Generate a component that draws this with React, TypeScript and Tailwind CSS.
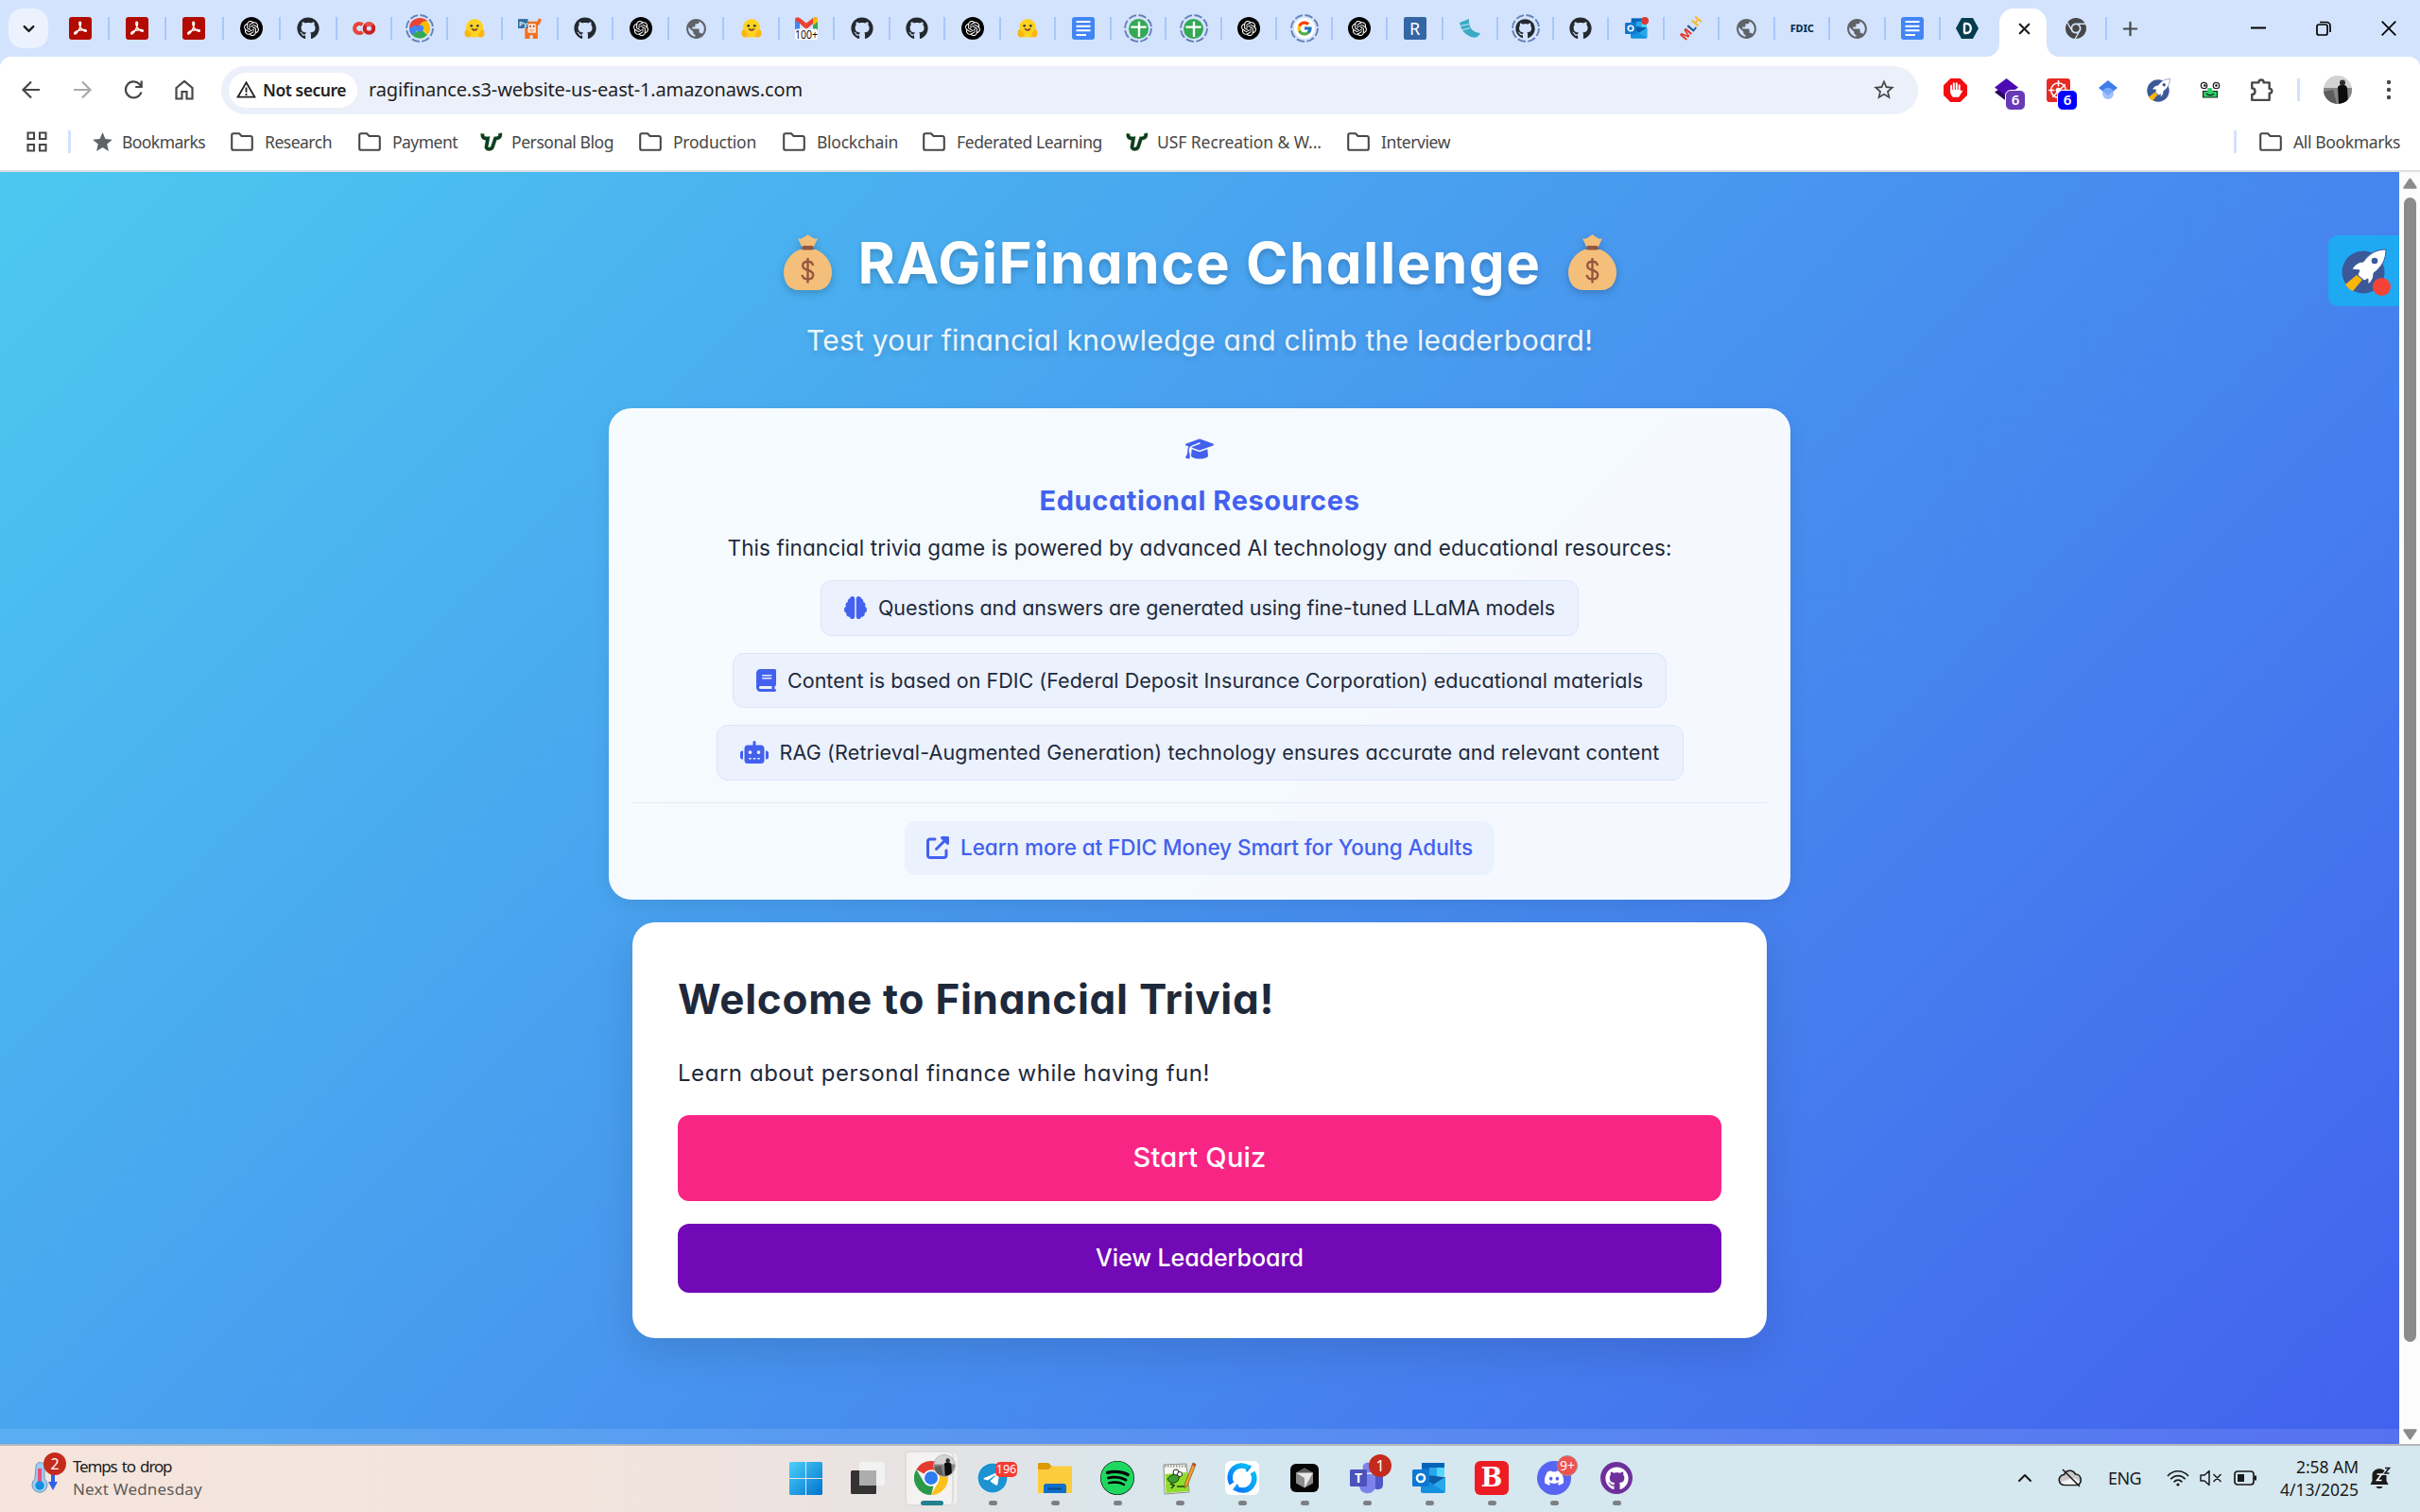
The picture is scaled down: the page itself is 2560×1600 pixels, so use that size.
import { useLayoutEffect, useRef, useState, type ReactNode } from 'react'
import {
  FaBook,
  FaBrain,
  FaChrome,
  FaDiscord,
  FaGithub,
  FaGraduationCap,
  FaRobot,
  FaSpotify,
  FaTelegram,
  FaUpRightFromSquare,
} from 'react-icons/fa6'
import { FcGoogle } from 'react-icons/fc'
import { SiOpenai } from 'react-icons/si'
import { MdPublic, MdStar, MdStarBorder } from 'react-icons/md'
import { ChevronDown, ChevronUp, Plus, X } from 'lucide-react'

interface FitTextProps {
  width: number
  className?: string
  children: string
}

// Spreads the letters so that a label takes the given width whatever font is installed
function FitText({ width, className = '', children }: FitTextProps) {
  const ref = useRef<HTMLSpanElement>(null)
  const [spacing, setSpacing] = useState(0)

  useLayoutEffect(() => {
    const el = ref.current
    if (!el) return
    el.style.letterSpacing = '0px'
    const natural = el.getBoundingClientRect().width
    const next = (width - natural) / children.length
    el.style.letterSpacing = `${next}px`
    setSpacing(next)
  }, [width, children])

  return (
    <span ref={ref} className={`inline-block whitespace-pre ${className}`} style={{ letterSpacing: `${spacing}px` }}>
      {children}
    </span>
  )
}

/* ---------- Favicons ---------- */

const AcrobatIcon = () => (
  <svg viewBox="0 0 24 24" className="h-6 w-6">
    <rect width="24" height="24" rx="3" fill="#b30b00" />
    <path
      d="M11.6 5.2c1.5 0 1 3.700-.6 7.100-1.500 3.300-3.800 6.300-5 5.600-1.300-1 1.600-3 5.300-3.900 3.600-.9 7.300-.8 7.100.7-.3 1.500-3.600-.1-5.600-2.700-1.900-2.400-2.700-6.800-1.200-6.800z"
      fill="none"
      stroke="#fff"
      strokeWidth="1.500"
    />
  </svg>
)

const OpenAiIcon = () => (
  <div className="flex h-6 w-6 items-center justify-center rounded-full bg-black">
    <SiOpenai className="h-4 w-4 text-white" />
  </div>
)

const GithubIcon = () => <FaGithub className="h-6 w-6 text-[#24292f]" />

const GlobeIcon = () => <MdPublic className="h-[25px] w-[25px] text-[#5f6368]" />

const ColabIcon = () => (
  <svg viewBox="0 0 24 24" className="h-6 w-6" fill="none" strokeWidth="4.200">
    <path d="M10.500 8.300a5 5 0 1 0 0 7.400" stroke="#e8463a" />
    <circle cx="17.400" cy="12" r="4.700" stroke="#c9211e" />
    <path d="M14 8.700a4.700 4.700 0 0 1 6.800 0" stroke="#ea4f43" />
  </svg>
)

const HuggingIcon = () => (
  <svg viewBox="0 0 24 24" className="h-6 w-6">
    <circle cx="12" cy="11" r="9" fill="#ffd21e" />
    <path d="M1.500 17c0-3 2-5 3.500-3l3 4.500c1 2-1 3.500-3.500 3S1.500 19 1.500 17zM22.500 17c0-3-2-5-3.500-3l-3 4.500c-1 2 1 3.500 3.500 3s3-2.500 3-4.500z" fill="#ffb50d" />
    <path d="M8 18l4 2.500 4-2.500v3.500H8z" fill="#ffd21e" />
    <circle cx="8.700" cy="9.300" r="1.400" fill="#3a3b45" />
    <circle cx="15.300" cy="9.300" r="1.400" fill="#3a3b45" />
    <path d="M8.500 12c1 3.500 6 3.500 7 0-2 1-5 1-7 0z" fill="#3a3b45" />
    <path d="M10.300 14c1-1 2.400-1 3.400 0-.9.900-2.500.9-3.400 0z" fill="#f44" />
  </svg>
)

const PyCowIcon = () => (
  <svg viewBox="0 0 24 24" className="h-[25px] w-[25px]">
    <path d="M7 4.500h12.500l1.500-3 3 1-2 5-2 1V22h-5v-3.500h-3V22H7z" fill="#f37021" />
    <path d="M10 7h8v9h-8z" fill="#fff3e8" />
    <circle cx="12.500" cy="9.500" r="1" fill="#c63d0c" />
    <circle cx="16" cy="9.500" r="1" fill="#c63d0c" />
    <rect x="11.500" y="12" width="5" height="3" rx="1" fill="#ffb98b" />
    <rect y="2" width="10" height="9.500" fill="#336d9d" />
    <text x="1" y="9.500" fontSize="7.500" fontWeight="700" fill="#cfe3f5" fontFamily="Noto Sans">Py</text>
  </svg>
)

const GmailIcon = () => (
  <svg viewBox="0 0 24 24" className="h-6 w-6">
    <path d="M0 3h5v11H0z" fill="#4285f4" />
    <path d="M19 3h5v11h-5z" fill="#34a853" />
    <path d="M0 3c0-3 3-3.500 5-2l7 5.500L19 1c2-1.500 5-1 5 2l-5 4-7 6-7-6z" fill="#ea4335" />
    <path d="M19 1c2-1.500 5-1 5 2v2l-5 4z" fill="#fbbc04" />
    <rect y="12.500" width="24" height="11.500" rx="2" fill="#fff" />
    <text x="0" y="22.800" fontSize="12.500" textLength="24" lengthAdjust="spacingAndGlyphs" fill="#000" fontFamily="Open Sans">100+</text>
  </svg>
)

const DocsIcon = () => (
  <svg viewBox="0 0 24 24" className="h-6 w-6">
    <rect width="24" height="24" rx="3" fill="#4285f4" />
    <path d="M4.500 5h15M4.500 9.700h15M4.500 14.300h15M4.500 19h10.500" stroke="#fff" strokeWidth="1.900" />
  </svg>
)

// Dashed ring marks a tab that was put to sleep
const SleepRing = ({ children }: { children: ReactNode }) => (
  <div className="relative flex h-[30px] w-[30px] items-center justify-center">
    <svg viewBox="0 0 30 30" className="absolute inset-0">
      <circle cx="15" cy="15" r="14" fill="none" stroke="#6580b5" strokeWidth="1.900" strokeDasharray="8.500 2.500" />
    </svg>
    {children}
  </div>
)

const SheetIcon = () => (
  <SleepRing>
    <svg viewBox="0 0 22 22" className="h-[21px] w-[21px]">
      <circle cx="11" cy="11" r="11" fill="#34a853" />
      <path d="M11.500 3v17M2.500 9h17" stroke="#fff" strokeWidth="2.500" />
    </svg>
  </SleepRing>
)

const GoogleSleepIcon = () => (
  <SleepRing>
    <div className="flex h-[22px] w-[22px] items-center justify-center rounded-full bg-white">
      <FcGoogle className="h-[18px] w-[18px]" />
    </div>
  </SleepRing>
)

const CloudSleepIcon = () => (
  <SleepRing>
    <svg viewBox="0 0 22 22" className="h-[22px] w-[22px]">
      <circle cx="11" cy="11" r="11" fill="#fff" />
      <path d="M11 0a11 11 0 0 1 11 11c0 3-1 5-3 7L9 5z" fill="#fbbc04" />
      <path d="M11 0C4 0 0 5 0 11c0 2 .5 4 2 6L14 4l5-1c-2-2-5-3-8-3z" fill="#ea4335" />
      <path d="M2 17c4 6 13 6 17 1l-6-6z" fill="#34a853" />
      <path d="M0 11c0 3 1 5 3 7l6-5-2-6z" fill="#4285f4" />
      <circle cx="11.500" cy="11" r="3.600" fill="#4285f4" />
    </svg>
  </SleepRing>
)

const GithubSleepIcon = () => (
  <SleepRing>
    <FaGithub className="h-[21px] w-[21px] text-[#24292f]" />
  </SleepRing>
)

const RIcon = () => (
  <div className="flex h-6 w-6 items-center justify-center rounded-[2px] bg-[#3465a4] text-lg leading-none text-white">R</div>
)

const HornIcon = () => (
  <svg viewBox="0 0 24 24" className="h-6 w-6">
    <path d="M1 6l10-4c-.5 9 3 14 12 15-2 5-7 6-12 3C5 17 2 12 1 6z" fill="#3babc3" />
    <path d="M1.500 9.500l9.500-2M3 14l9-2.500" stroke="#d3e3fd" strokeWidth="1" />
  </svg>
)

const OutlookIcon = ({ className }: { className: string }) => (
  <svg viewBox="0 0 36 36" className={className}>
    <path d="M10 2h24v14H10z" fill="#0364b8" />
    <path d="M10 7h8v9h-8z" fill="#0a6cc4" />
    <path d="M18 7h8v9h-8z" fill="#28a8ea" />
    <path d="M26 7h8v9h-8z" fill="#50d9ff" />
    <path d="M9 15l26 3v14a2 2 0 0 1-2 2H11a2 2 0 0 1-2-2z" fill="#1490df" />
    <path d="M35 17v16L16 22z" fill="#28a8ea" />
    <path d="M35 17L22 25l-6-4V15z" fill="#0a5ea8" />
    <rect y="9" width="18" height="18" rx="1.500" fill="#0f78d4" />
    <circle cx="9" cy="18" r="4.100" fill="none" stroke="#fff" strokeWidth="2.500" />
  </svg>
)

const OutlookTabIcon = () => (
  <div className="relative">
    <OutlookIcon className="h-6 w-6" />
    <span className="absolute -right-px top-0 h-2 w-2 rounded-full bg-[#d93a35]" />
  </div>
)

const MlhIcon = () => (
  <div className="-rotate-50 bg-[linear-gradient(90deg,#e73427_0_42%,#1d539f_42%_65%,#f8b92a_65%)] bg-clip-text text-[12.5px] font-extrabold leading-none text-transparent">
    MLH
  </div>
)

const FdicIcon = () => <FitText width={25} className="text-[11px] font-extrabold text-[#0a3255]">FDIC</FitText>

const DHexIcon = () => (
  <svg viewBox="0 0 24 24" className="h-6 w-6">
    <path d="M6 1h12l6 11-6 11H6L0 12z" fill="#053c4e" />
    <path d="M9 7v10M8.500 7h2.800c6 0 6 10 0 10H8.500" fill="none" stroke="#fff" strokeWidth="2.400" />
  </svg>
)

const FAVICONS = [
  AcrobatIcon, AcrobatIcon, AcrobatIcon, OpenAiIcon, GithubIcon, ColabIcon, CloudSleepIcon, HuggingIcon,
  PyCowIcon, GithubIcon, OpenAiIcon, GlobeIcon, HuggingIcon, GmailIcon, GithubIcon, GithubIcon, OpenAiIcon,
  HuggingIcon, DocsIcon, SheetIcon, SheetIcon, OpenAiIcon, GoogleSleepIcon, OpenAiIcon, RIcon, HornIcon,
  GithubSleepIcon, GithubIcon, OutlookTabIcon, MlhIcon, GlobeIcon, FdicIcon, GlobeIcon, DocsIcon,
]

/* ---------- Browser chrome ---------- */

const TabStrip = () => (
  <div className="flex h-[60px] items-center bg-[#d3e3fd]">
    <button className="ml-[9px] flex h-[42px] w-[42px] items-center justify-center rounded-[15px] bg-[#ebf2fe]">
      <ChevronDown className="h-[19px] w-[19px] text-[#1f1f1f]" strokeWidth={3} />
    </button>
    <div className="ml-[5px] flex h-full items-center">
      {FAVICONS.map((Icon, i) => (
        <div
          key={i}
          className={`flex h-6 items-center justify-center border-r-2 border-[#a8c7fa] ${i < 5 ? 'w-[60.2px]' : 'w-[58.5px]'}`}
        >
          <Icon />
        </div>
      ))}
      <div className="flex w-[56px] items-center justify-center">
        <DHexIcon />
      </div>
    </div>
    <div className="relative ml-[6px] flex h-[51px] w-[50px] items-center justify-center self-end rounded-t-[15px] bg-white pb-2">
      <svg viewBox="0 0 14 14" className="absolute -left-[14px] bottom-0 h-[14px] w-[14px]" fill="#fff">
        <path d="M14 0v14H0C8 14 14 8 14 0z" />
      </svg>
      <X className="ml-0.5 h-[19px] w-[19px] text-[#1f1f1f]" strokeWidth={2.8} />
      <svg viewBox="0 0 14 14" className="absolute -right-[14px] bottom-0 h-[14px] w-[14px]" fill="#fff">
        <path d="M0 0v14h14C6 14 0 8 0 0z" />
      </svg>
    </div>
    <div className="flex h-6 w-[64px] items-center justify-center border-r-2 border-[#a8c7fa]">
      <FaChrome className="h-[22px] w-[22px] text-[#474747]" />
    </div>
    <Plus className="ml-[13px] h-[23px] w-[23px] text-[#474747]" strokeWidth={2.3} />
    <div className="ml-auto flex items-center gap-[53px] pr-[25px]">
      <svg viewBox="0 0 16 16" className="h-4 w-4"><path d="M0 7.500h16" stroke="#000" strokeWidth="2" /></svg>
      <svg viewBox="0 0 16 16" className="h-4 w-4" fill="none" stroke="#000" strokeWidth="1.700">
        <rect x="1" y="4" width="11" height="11" rx="2" />
        <path d="M4 1.500h7a4 4 0 0 1 4 4V12" />
      </svg>
      <svg viewBox="0 0 16 16" className="h-4 w-4"><path d="M.7.7l14.600 14.600M15.300.7L.7 15.300" stroke="#000" strokeWidth="1.700" /></svg>
    </div>
  </div>
)

const RocketLogo = ({ className }: { className: string }) => (
  <svg viewBox="0 0 48 48" className={className}>
    <circle cx="23" cy="25" r="22.500" fill="#3b5998" />
    <path d="M4 38l12-10 6 5-10 12c-3-1-6-4-8-7z" fill="#fbb60b" />
    <path d="M47 1C36 1 29 6 23 14c-5 0-9 3-12 8l8 1-2 5 7 6 4-2 0 6c4-3 6-7 6-12 8-6 13-14 13-25z" fill="#fff" stroke="#3b5998" strokeWidth="1" />
    <circle cx="35" cy="13" r="3.300" fill="#3b5998" />
  </svg>
)

const CountBadge = ({ className }: { className: string }) => (
  <span className={`absolute left-[11px] top-[12px] flex h-[22px] w-[22px] items-center justify-center rounded-[6px] border border-white text-[15px] font-semibold text-white ${className}`}>
    6
  </span>
)

const Avatar = ({ className }: { className: string }) => (
  <svg viewBox="0 0 30 30" className={className}>
    <defs>
      <clipPath id="avatar">
        <circle cx="15" cy="15" r="15" />
      </clipPath>
    </defs>
    <g clipPath="url(#avatar)">
      <rect width="30" height="30" fill="#d2d2d2" />
      <path d="M0 13h30v17H0z" fill="#858585" />
      <path d="M0 17l10-2 4 15H0z" fill="#5c5c5c" />
      <path d="M15 12c2-3 9-3 10 1l1 17H16z" fill="#0c0c0c" />
      <circle cx="20" cy="7.500" r="3" fill="#2c2c2c" />
    </g>
  </svg>
)

const Toolbar = () => (
  <div className="flex h-[70px] items-center bg-white">
    <div className="flex w-[234px] items-center gap-[30px] pl-[21px] text-[#474747]">
      <svg viewBox="0 0 24 24" className="h-6 w-6" fill="none" stroke="currentColor" strokeWidth="2.200">
        <path d="M21 12H4M12 3.500L3.500 12l8.500 8.500" />
      </svg>
      <svg viewBox="0 0 24 24" className="h-6 w-6" fill="none" stroke="#a9a9a9" strokeWidth="2.200">
        <path d="M3 12h17M12 3.500l8.500 8.500-8.500 8.500" />
      </svg>
      <svg viewBox="0 0 24 24" className="h-6 w-6" fill="none" stroke="currentColor" strokeWidth="2.200">
        <path d="M20.500 14.500A8.500 8.500 0 1 1 18.500 6l2 2.500M20.700 2.500v6.500h-6.500" />
      </svg>
      <svg viewBox="0 0 24 24" className="h-6 w-6" fill="none" stroke="currentColor" strokeWidth="2.200">
        <path d="M3.500 10L12 3l8.500 7v11.500h-6V14h-5v7.500h-6z" />
      </svg>
    </div>
    <div className="flex h-[51px] w-[1795px] items-center rounded-full bg-[#ecf0fa] pl-2 pr-[23px]">
      <div className="flex h-[37px] w-[136px] items-center rounded-full bg-white pl-2">
        <svg viewBox="0 0 22 20" className="h-5 w-[21px]" fill="none" stroke="#1f1f1f" strokeWidth="1.900">
          <path d="M11 2L1.700 18h18.600zM11 7.500v5.500M11 14.300v2" />
        </svg>
        <FitText width={88} className="ml-[7px] text-[17.5px] font-semibold text-[#1f1f1f]">Not secure</FitText>
      </div>
      <FitText width={459} className="ml-3 text-[20px] text-[#1f1f1f]">ragifinance.s3-website-us-east-1.amazonaws.com</FitText>
      <MdStarBorder className="ml-auto h-[26px] w-[26px] text-[#474747]" />
    </div>
    <div className="ml-[27px] flex items-center">
      <svg viewBox="0 0 24 24" className="mr-[29px] h-[25px] w-[25px]">
        <path d="M7 0h10l7 7v10l-7 7H7l-7-7V7z" fill="#f40d12" />
        <path d="M7.800 13V7.500M10.400 11V5M13.200 11V5M16 13V7" stroke="#fff" strokeWidth="1.900" strokeLinecap="round" />
        <path d="M6.900 11.500h10v1.500l1.300-1c.8-.3 1.300.6.8 1.400L15.500 19H9.500c-1.500-1.500-2.600-3-2.600-5z" fill="#fff" />
      </svg>
      <div className="relative mr-[30px]">
        <svg viewBox="0 0 24 24" className="h-[25px] w-[25px]">
          <path d="M12 6l12 8-12 9L0 14z" fill="#270656" />
          <path d="M12 0l12 9-12 9L0 9z" fill="#4c0bb0" />
        </svg>
        <CountBadge className="bg-[#673ab7]" />
      </div>
      <div className="relative mr-[28px]">
        <svg viewBox="0 0 24 24" className="h-[25px] w-[25px]">
          <rect width="24" height="24" rx="3" fill="#e62b25" />
          <g fill="none" stroke="#fff" strokeWidth="1.500">
            <circle cx="12" cy="12" r="7.500" />
            <path d="M12 2v6M12 16v6M2 12h6M16 12h6M6 19L19 6" />
            <circle cx="12" cy="12" r="2" fill="#fff" />
          </g>
        </svg>
        <CountBadge className="bg-[#0000ff]" />
      </div>
      <svg viewBox="0 0 24 24" className="mr-[29px] h-[24px] w-[24px]">
        <path d="M12 2l10 8-10 8-10-8z" fill="#3f7de8" />
        <circle cx="12" cy="16" r="6" fill="#a0c3ff" />
        <path d="M6.500 13.500C9 9.500 15 9.500 17.500 13.500L12 18z" fill="#76a7fa" />
      </svg>
      <RocketLogo className="mr-[30px] h-[25px] w-[25px]" />
      <svg viewBox="0 0 24 24" className="mr-[29px] h-[24px] w-[24px]">
        <path d="M4.500 13.500h15V20h-15z" fill="#27d366" stroke="#222" strokeWidth="1.200" />
        <path d="M9.500 10h4l1.500 4H9z" fill="#27d366" />
        <path d="M8 16c2 2.300 6 2.300 8 0" fill="none" stroke="#222" strokeWidth="1.300" />
        <g fill="#fff" stroke="#222" strokeWidth="1.300">
          <circle cx="5.500" cy="7.500" r="3.200" />
          <circle cx="18.500" cy="7.500" r="3.200" />
        </g>
        <circle cx="6.300" cy="7.500" r="1.200" />
        <circle cx="18.500" cy="7.500" r="1.200" />
      </svg>
      <svg viewBox="0 0 24 24" className="h-[26px] w-[26px]" fill="none" stroke="#474747" strokeWidth="2.200">
        <path d="M3 5h6.500c0-3.600 5-3.600 5 0H20v6c3.300 0 3.300 4.500 0 4.500V22H3v-5.500c4 0 4-6 0-6z" strokeLinejoin="round" />
      </svg>
      <div className="ml-[25px] h-6 w-[3px] bg-[#d3e3fd]" />
      <Avatar className="ml-[25px] h-[30px] w-[30px]" />
      <svg viewBox="0 0 6 22" className="ml-[36px] h-[22px] w-[6px]" fill="#474747">
        <circle cx="3" cy="3" r="2.200" />
        <circle cx="3" cy="11" r="2.200" />
        <circle cx="3" cy="19" r="2.200" />
      </svg>
    </div>
  </div>
)

const FolderIcon = () => (
  <svg viewBox="0 0 24 20" className="h-5 w-6" fill="none" stroke="#474747" strokeWidth="2.100">
    <path d="M1.200 3a1.800 1.800 0 0 1 1.800-1.800h6L11.500 4H21a1.800 1.800 0 0 1 1.800 1.800V17a1.800 1.800 0 0 1-1.800 1.800H3A1.800 1.800 0 0 1 1.200 17z" />
  </svg>
)

const BullIcon = () => (
  <svg viewBox="0 0 24 22" className="h-[22px] w-6" fill="none">
    <path d="M2.500 2.500c-.6 4 1.500 5.500 5.500 5l-1.500 9c-.3 3 5.500 3 6.500 0l3-9c3.500 0 6-1.500 5-5.500" stroke="#cfc493" strokeWidth="4.600" />
    <path d="M2.500 2.500c-.6 4 1.500 5.500 5.500 5l-1.500 9c-.3 3 5.500 3 6.500 0l3-9c3.500 0 6-1.500 5-5.500" stroke="#053f28" strokeWidth="3.500" />
  </svg>
)

const BOOKMARKS = [
  { label: 'Bookmarks', icon: 'star', textWidth: 88, cell: 'w-[146px]' },
  { label: 'Research', icon: 'folder', textWidth: 71, cell: 'w-[135px]' },
  { label: 'Payment', icon: 'folder', textWidth: 69, cell: 'w-[129px]' },
  { label: 'Personal Blog', icon: 'bull', textWidth: 108, cell: 'w-[168px]' },
  { label: 'Production', icon: 'folder', textWidth: 88, cell: 'w-[152px]' },
  { label: 'Blockchain', icon: 'folder', textWidth: 86, cell: 'w-[148px]' },
  { label: 'Federated Learning', icon: 'folder', textWidth: 154, cell: 'w-[215px]' },
  { label: 'USF Recreation & W...', icon: 'bull', textWidth: 174, cell: 'w-[234px]' },
  { label: 'Interview', icon: 'folder', textWidth: 73, cell: 'w-[120px]' },
]

const BookmarkBar = () => (
  <div className="flex h-[50px] items-center bg-white pb-[10px] text-[17.5px] text-[#474747]">
    <svg viewBox="0 0 22 22" className="ml-7 h-[22px] w-[22px]" fill="none" stroke="#474747" strokeWidth="2.100">
      <path d="M1.500 1.500h6.500v6.500H1.500zM14 1.500h6.500v6.500H14zM1.500 14h6.500v6.500H1.500zM14 14h6.500v6.500H14z" />
    </svg>
    <div className="ml-[22px] mr-[23px] h-6 w-[3px] bg-[#d3e3fd]" />
    {BOOKMARKS.map((b) => (
      <div key={b.label} className={`flex items-center ${b.cell}`}>
        {b.icon === 'star' && <MdStar className="-ml-0.5 mr-[8px] h-[25px] w-[25px] text-[#5f6368]" />}
        {b.icon === 'folder' && <div className="mr-[12px]"><FolderIcon /></div>}
        {b.icon === 'bull' && <div className="mr-[9px]"><BullIcon /></div>}
        <FitText width={b.textWidth}>{b.label}</FitText>
      </div>
    ))}
    <div className="ml-auto h-6 w-[3px] bg-[#d3e3fd]" />
    <div className="ml-[24px] mr-[12px]"><FolderIcon /></div>
    <FitText width={113} className="mr-[21px]">All Bookmarks</FitText>
  </div>
)

/* ---------- Web page ---------- */

const MoneyBag = () => (
  <svg viewBox="0 0 51 59" className="h-[59px] w-[51px] drop-shadow-[0_3px_4px_rgba(0,0,0,0.2)]">
    <path d="M19 13L15 4c2 1 4 1 6-1 1 0 2-1 4.500-3 2.500 2 3.500 3 4.500 3 2 2 4 2 6 1l-4 9z" fill="#f4bf7a" />
    <path d="M17 16C7 20 0 30 0 40c0 11 6 19 16 19h19c10 0 16-8 16-19 0-10-7-20-17-24z" fill="#f4bf7a" />
    <rect x="19.500" y="12" width="12" height="4.500" rx="1.500" fill="#945742" />
    <path
      d="M31 33c-.5-3-2.600-4.300-5.500-4.300-3.200 0-5.300 1.700-5.300 4.500 0 6.300 11 3.300 11 9.500 0 3-2.300 4.700-5.700 4.700-3.200 0-5.500-1.500-5.900-4.600M25.500 25v26.500"
      fill="none"
      stroke="#945742"
      strokeWidth="2.400"
    />
  </svg>
)

const RESOURCES = [
  { Icon: FaBrain, text: 'Questions and answers are generated using fine-tuned LLaMA models', textWidth: 716, pill: 'w-[802px]', icon: 'w-6' },
  { Icon: FaBook, text: 'Content is based on FDIC (Federal Deposit Insurance Corporation) educational materials', textWidth: 905, pill: 'w-[988px]', icon: 'w-[21px]' },
  { Icon: FaRobot, text: 'RAG (Retrieval-Augmented Generation) technology ensures accurate and relevant content', textWidth: 931, pill: 'w-[1023px]', icon: 'w-[30px]' },
]

const ResourcesCard = () => (
  <section className="flex h-[520px] w-[1250px] flex-col items-center rounded-3xl border border-white/40 bg-white/95 px-6 pt-[30px] shadow-[0_6px_18px_rgba(0,0,0,0.08)]">
    <FaGraduationCap className="h-6 w-[30px] text-[#4361ee]" />
    <h2 className="mt-[22px] h-[42px] text-[29px] font-bold leading-[42px] text-[#4361ee]">
      <FitText width={339}>Educational Resources</FitText>
    </h2>
    <p className="mt-[11px] h-9 text-[22.5px] leading-9">
      <FitText width={999}>This financial trivia game is powered by advanced AI technology and educational resources:</FitText>
    </p>
    <ul className="mt-4 flex flex-col items-center gap-[18px] text-[21.5px]">
      {RESOURCES.map(({ Icon, text, textWidth, pill, icon }) => (
        <li key={text} className={`flex h-[58.5px] items-center justify-center gap-3 rounded-xl border border-[#dbe3fb] bg-[#ebf1fd] ${pill}`}>
          <Icon className={`h-6 text-[#4361ee] ${icon}`} />
          <FitText width={textWidth}>{text}</FitText>
        </li>
      ))}
    </ul>
    <div className="mt-[23px] flex w-full justify-center border-t border-[#e1e8fb] pt-[19px]">
      <a className="flex h-[57px] w-[624px] items-center justify-center gap-3 rounded-xl bg-[#ebf1fd] text-[22.5px] font-medium text-[#4361ee]">
        <FaUpRightFromSquare className="h-6 w-6" />
        <FitText width={542}>Learn more at FDIC Money Smart for Young Adults</FitText>
      </a>
    </div>
  </section>
)

const WelcomeCard = () => (
  <section className="mt-6 h-[440px] w-[1200px] rounded-3xl bg-white px-12 pt-[51px] shadow-[0_15px_45px_rgba(0,0,0,0.12)]">
    <h2 className="h-[60px] text-[44px] font-bold leading-[60px]">
      <FitText width={631}>Welcome to Financial Trivia!</FitText>
    </h2>
    <p className="mt-[31px] h-9 text-[24px] leading-9">
      <FitText width={563}>Learn about personal finance while having fun!</FitText>
    </p>
    <button className="mt-[26px] flex h-[91px] w-full items-center justify-center rounded-xl bg-[#f92585] pb-0.5 text-[29px] font-medium text-white">
      <FitText width={141}>Start Quiz</FitText>
    </button>
    <button className="mt-6 flex h-[73px] w-full items-center justify-center rounded-xl bg-[#7209b7] text-[25px] font-medium text-white">
      <FitText width={220}>View Leaderboard</FitText>
    </button>
  </section>
)

const Page = () => (
  <div className="flex h-[1346px]">
    <main className="relative flex w-[2538px] flex-col items-center bg-[linear-gradient(135deg,#4cc9f0_0%,#4361ee_100%)] font-['Inter',sans-serif] text-[#1e293b] [font-feature-settings:'cv11']">
      <h1 className="mt-[50px] flex h-[91px] items-center gap-[28px] text-[60px] font-bold leading-none text-white [text-shadow:0_3px_6px_rgba(0,0,0,0.2)]">
        <MoneyBag />
        <FitText width={723}>RAGiFinance Challenge</FitText>
        <MoneyBag />
      </h1>
      <p className="mb-[50px] mt-4 h-[43px] text-[30px] leading-[43px] text-white/90 [text-shadow:0_3px_6px_rgba(0,0,0,0.15)]">
        <FitText width={832}>Test your financial knowledge and climb the leaderboard!</FitText>
      </p>
      <ResourcesCard />
      <WelcomeCard />
      <footer className="mt-auto h-4 w-full bg-white/10" />
      <div className="absolute right-0 top-[67px] flex h-[75px] w-[75px] items-center justify-center rounded-l-[10px] bg-[#1ea9f2]">
        <RocketLogo className="h-12 w-12" />
        <span className="absolute left-[47px] top-[45px] h-[19px] w-[19px] rounded-full bg-[#f44336]" />
      </div>
    </main>
    <div className="flex w-[22px] flex-col items-center bg-[#fcfcfc] pt-[6px] pb-[4px]">
      <svg viewBox="0 0 15 12" className="h-3 w-[15px]" fill="#8b8b8b">
        <path d="M6.500 1c.5-.8 1.500-.8 2 0l6 9c.5 1 0 1.700-1 1.700h-12c-1 0-1.500-.7-1-1.700z" />
      </svg>
      <div className="mt-[9px] h-[1211px] w-[13px] rounded-full bg-[#8b8b8b]" />
      <svg viewBox="0 0 15 12" className="mt-auto h-3 w-[15px]" fill="#8b8b8b">
        <path d="M6.500 11c.5.800 1.500.800 2 0l6-9c.5-1 0-1.700-1-1.700h-12c-1 0-1.500.7-1 1.700z" />
      </svg>
    </div>
  </div>
)

/* ---------- Taskbar ---------- */

const WindowsIcon = () => (
  <svg viewBox="0 0 35 35" className="h-[35px] w-[35px]">
    <defs>
      <linearGradient id="win" x1="0" y1="0" x2="1" y2="1">
        <stop offset="0" stopColor="#4cd0fb" />
        <stop offset="1" stopColor="#0072ce" />
      </linearGradient>
    </defs>
    <path d="M1 0h16v17H0V1zM18 0h16l1 1v16H18zM0 18h17v17H1l-1-1zM18 18h17v16l-1 1H18z" fill="url(#win)" />
  </svg>
)

const TaskViewIcon = () => (
  <svg viewBox="0 0 36 35" className="h-[35px] w-9">
    <rect y="9" width="27" height="25" rx="1.500" fill="#333" />
    <rect x="9" width="27" height="25" rx="1.500" fill="#f4f4f4" fillOpacity=".85" />
    <path d="M9 9h18v16H9z" fill="#adadad" />
  </svg>
)

const ChromeIcon = () => (
  <div className="relative">
    <svg viewBox="0 0 36 36" className="h-9 w-9">
      <path d="M18 18L2.400 9A18 18 0 0 1 33.600 9z" fill="#e53a2f" />
      <path d="M18 9.500h15.800a18 18 0 0 1-15.800 26.500l7.500-13.500z" fill="#fcc21b" />
      <path d="M2.400 9l8 13.500 10 4L18 36A18 18 0 0 1 2.400 9z" fill="#2a9a48" />
      <circle cx="18" cy="18" r="8.800" fill="#fff" />
      <circle cx="18" cy="18" r="7" fill="#2f7df0" />
    </svg>
    <Avatar className="absolute -top-[7px] left-[20px] h-[24px] w-[24px] rounded-full border border-[#aaa]" />
  </div>
)

const TelegramIcon = () => (
  <div className="relative">
    <div className="h-8 w-8 rounded-full bg-white">
      <FaTelegram className="h-8 w-8 text-[#1d93d2]" />
    </div>
    <span className="absolute -top-px left-[19px] flex h-[16px] w-[23px] items-center justify-center rounded-[5px] bg-[#f23c34] text-[12.5px] leading-none text-white">196</span>
  </div>
)

const ExplorerIcon = () => (
  <svg viewBox="0 0 36 33" className="h-[33px] w-9">
    <path d="M0 1.500C0 .5.500 0 1.500 0H11l4 4-4 4H0z" fill="#dc9a05" />
    <path d="M11 7l3.500-3.500H35a1 1 0 0 1 1 1V32H0V7z" fill="#fdcb3e" />
    <path d="M6 32v-7a3 3 0 0 1 3-3h18a3 3 0 0 1 3 3v7z" fill="#0f6fc9" />
    <path d="M11 27.500h14" stroke="#0a4a8f" strokeWidth="2" />
  </svg>
)

const SpotifyIcon = () => (
  <div className="rounded-full bg-black">
    <FaSpotify className="h-9 w-9 text-[#1ed760]" />
  </div>
)

const NotepadIcon = () => (
  <svg viewBox="0 0 36 36" className="h-9 w-9">
    <path d="M1 4l24-1 3 30-26 2z" fill="#f5f7f2" stroke="#8a8f85" strokeWidth="1" />
    <path d="M2.500 14l23-2 2 20-24 2z" fill="#8fdc2c" />
    <path d="M2 5.500h23" stroke="#9c9c9c" strokeWidth="2.500" strokeDasharray="1.500 1.500" />
    <path d="M5 19c3-5 9-6 13-3l-2 5c-4 4-10 2-11-2z" fill="#3f9d2f" stroke="#173f13" strokeWidth="1" />
    <circle cx="14" cy="12" r="3" fill="#fff" stroke="#222" />
    <circle cx="18" cy="14" r="2.500" fill="#fff" stroke="#222" />
    <path d="M8 24l4 2-3 3M15 27h9" fill="none" stroke="#173f13" strokeWidth="1.600" />
    <path d="M32 2l3 1.500L26 26l-3 2.500.300-4z" fill="#f0a533" stroke="#8a5614" strokeWidth=".8" />
    <path d="M32 2l3 1.500-1 2.500-3-1.500z" fill="#c14a3a" />
  </svg>
)

const RingIcon = () => (
  <svg viewBox="0 0 36 36" className="h-9 w-9">
    <defs>
      <linearGradient id="ring" x1="0" y1="1" x2="1" y2="0">
        <stop offset="0" stopColor="#0a6cff" />
        <stop offset="1" stopColor="#06cbf0" />
      </linearGradient>
    </defs>
    <rect width="36" height="36" rx="6" fill="#fff" />
    <path d="M24.800 7.200A12.500 12.500 0 0 0 7 24M11.200 28.800A12.500 12.500 0 0 0 29 12" fill="none" stroke="url(#ring)" strokeWidth="5.500" />
    <path d="M22.500 11l4.500-6M9 31l4.500-6" stroke="#0a9cf5" strokeWidth="2.500" />
  </svg>
)

const CursorIcon = () => (
  <svg viewBox="0 0 30 30" className="h-[30px] w-[30px]">
    <rect width="30" height="30" rx="6" fill="#050505" />
    <path d="M15 4.500l9 5v11l-9 5-9-5v-11z" fill="#8c8c8c" />
    <path d="M6 9.500l9-5 9 5-9 2z" fill="#5a5a5a" />
    <path d="M6 9.500h18l-9 16V15z" fill="#e8e8e8" />
  </svg>
)

const TeamsIcon = () => (
  <div className="relative">
    <svg viewBox="0 0 36 36" className="h-9 w-9">
      <circle cx="30" cy="9" r="4" fill="#5059c9" />
      <circle cx="19" cy="7" r="5.500" fill="#7b83eb" />
      <path d="M24 14h11v11c0 6-8 7-11 2z" fill="#4f58c8" />
      <path d="M10 14h17v12c0 11-17 11-17 0z" fill="#7b83eb" />
      <rect y="9" width="18" height="18" rx="1.500" fill="#4b53bc" />
      <text x="9" y="23" textAnchor="middle" fontSize="14" fontWeight="700" fill="#fff" fontFamily="Open Sans">T</text>
    </svg>
    <span className="absolute -top-[7px] left-[20px] flex h-6 w-6 items-center justify-center rounded-full bg-[#c42b1c] text-base text-white">1</span>
  </div>
)

const BitdefenderIcon = () => (
  <div className="flex h-9 w-9 items-center justify-center rounded-[6px] bg-[#ed1c24] pb-0.5 font-['DejaVu_Serif',serif] text-[27px] font-bold leading-none text-white">
    B
  </div>
)

const DiscordIcon = () => (
  <div className="relative flex h-9 w-9 items-center justify-center rounded-full bg-[#5865f2]">
    <FaDiscord className="h-[22px] w-[22px] text-white" />
    <span className="absolute -top-[6px] left-[21px] flex h-[22px] w-[22px] items-center justify-center rounded-full border border-[#b98285] bg-[#ef5350] text-sm leading-none text-white">9+</span>
  </div>
)

const GithubDesktopIcon = () => (
  <div className="flex h-[34px] w-[34px] items-center justify-center rounded-full bg-[#6e2f9b]">
    <FaGithub className="h-[25px] w-[25px] text-white" />
  </div>
)

const OutlookTaskIcon = () => <OutlookIcon className="h-9 w-9" />

const APPS = [
  TelegramIcon, ExplorerIcon, SpotifyIcon, NotepadIcon, RingIcon, CursorIcon, TeamsIcon, OutlookTaskIcon,
  BitdefenderIcon, DiscordIcon, GithubDesktopIcon,
]

const Tray = () => (
  <div className="flex items-center pr-[31px] text-[#1a1a1a]">
    <ChevronUp className="h-6 w-6" strokeWidth={2} />
    <svg viewBox="0 0 26 20" className="ml-[23px] h-5 w-[26px]">
      <path d="M7 17.500a5.500 5.500 0 0 1-.5-11C8 2 15 0 18.500 6c7 0 8 11 1 11.500z" fill="#c9c9c9" stroke="#1a1a1a" strokeWidth="1.600" />
      <path d="M3 15c3-3 7-2 9-4 4-2 8 0 11 3-1 2-2 2.700-4 2.700H7z" fill="#f4f4f4" />
      <path d="M5 1l18 18" stroke="#1a1a1a" strokeWidth="1.600" />
    </svg>
    <FitText width={35} className="ml-[27px] text-[18px]">ENG</FitText>
    <svg viewBox="0 0 24 18" className="ml-[27px] h-[18px] w-6" fill="none" stroke="#1a1a1a" strokeWidth="1.700">
      <path d="M1 7c6-7 16-7 22 0M4.300 10.300c4.500-5 11-5 15.400 0M7.600 13.300c2.700-2.800 6-2.800 8.800 0" />
      <circle cx="12" cy="16" r="1.600" fill="#1a1a1a" stroke="none" />
    </svg>
    <svg viewBox="0 0 24 18" className="ml-[11px] h-[18px] w-6" fill="none" stroke="#1a1a1a" strokeWidth="1.500">
      <path d="M1 6h4l5-4.500v15L5 12H1zM14.500 5l8 8M22.500 5l-8 8" strokeLinejoin="round" />
    </svg>
    <svg viewBox="0 0 24 16" className="ml-[12px] h-4 w-6" fill="none" stroke="#1a1a1a" strokeWidth="1.700">
      <rect x="1" y="1" width="20" height="14" rx="3" />
      <rect x="4" y="4" width="7" height="8" fill="#1a1a1a" stroke="none" />
      <path d="M22.800 5.500v5" strokeWidth="2.500" />
    </svg>
    <div className="ml-[24px] flex w-[84px] flex-col items-end text-[17.5px] leading-6">
      <FitText width={66}>2:58 AM</FitText>
      <FitText width={83}>4/13/2025</FitText>
    </div>
    <svg viewBox="0 0 22 24" className="ml-[12px] h-6 w-[22px]" fill="#1a1a1a">
      <path d="M2.500 9c0-9 15-9 15 0v6l2 4H.5l2-4zM6.500 21h7c-1 3-6 3-7 0z" />
      <path d="M7.500 8h5L7.500 14.500h5" fill="none" stroke="#fff" strokeWidth="1.600" />
      <path d="M16 1.500h4.500L16 7h4.500" fill="none" stroke="#d6e7ef" strokeWidth="4" />
      <path d="M16 1.500h4.500L16 7h4.500" fill="none" stroke="#1a1a1a" strokeWidth="1.600" />
    </svg>
  </div>
)

const Taskbar = () => (
  <div className="flex h-[72px] items-center border-t-2 border-[#b4b8bb] bg-[linear-gradient(90deg,#f6e5dc_0%,#f2e4dd_24%,#ece3e0_34%,#dfe4e8_42%,#d5e7ef_52%,#d5e7ef_100%)] pb-0.5">
    <div className="flex w-[819px] items-center pl-[33px]">
      <div className="relative -top-[5px] h-[44px] w-[38px]">
        <svg viewBox="0 0 38 44" className="h-[44px] w-[38px]">
          <path d="M5 15a4.500 4.500 0 0 1 9 0v13a8 8 0 1 1-10 0z" fill="#9dcdf3" stroke="#6e94bb" strokeWidth="1" />
          <path d="M9 17v17" stroke="#e8507c" strokeWidth="4" />
          <circle cx="9" cy="35" r="4.700" fill="#1490df" />
          <path d="M23 22v12" stroke="#2e62e8" strokeWidth="4" />
          <path d="M18 31h10l-5 9z" fill="#2e62e8" />
        </svg>
        <span className="absolute left-[13px] top-0 flex h-6 w-6 items-center justify-center rounded-full bg-[#c42b1c] text-base text-white">2</span>
      </div>
      <div className="ml-[6px] flex flex-col text-[17px] leading-6 text-[#1a1a1a]">
        <FitText width={119} className="[word-spacing:2px]">Temps to drop</FitText>
        <FitText width={137} className="text-[#5f5b59]">Next Wednesday</FitText>
      </div>
    </div>
    <div className="flex h-full items-center">
      <div className="flex w-[66px] justify-center"><WindowsIcon /></div>
      <div className="flex w-[66px] justify-center"><TaskViewIcon /></div>
      <div className="relative flex h-[59px] w-[66px] items-center">
        <div className="absolute left-[12px] h-[57px] w-[51px] rounded-md border border-[#dcdcdc] bg-[#efefef]" />
        <div className="relative ml-[6px] flex h-[59px] w-[52px] items-center justify-center rounded-md border-2 border-[#e0dedd] bg-[#f5f3f2] pl-1">
          <ChromeIcon />
          <span className="absolute -bottom-px left-[15px] h-[5px] w-6 rounded-full bg-[#22808f]" />
        </div>
      </div>
      {APPS.map((Icon, i) => (
        <div key={i} className="relative flex h-full w-[66px] items-center justify-center">
          <Icon />
          <span className="absolute bottom-[5px] h-[5px] w-[9px] rounded-full bg-[#7d8082]" />
        </div>
      ))}
    </div>
    <div className="ml-auto">
      <Tray />
    </div>
  </div>
)

export default function App() {
  return (
    <div className="h-[1600px] w-[2560px] overflow-hidden bg-white font-['Noto_Sans',sans-serif]">
      <div className="bg-[#d3e3fd]">
        <TabStrip />
        <div className="overflow-hidden rounded-t-xl border-b-2 border-[#dcdfe2] bg-white">
          <Toolbar />
          <BookmarkBar />
        </div>
      </div>
      <Page />
      <Taskbar />
    </div>
  )
}
